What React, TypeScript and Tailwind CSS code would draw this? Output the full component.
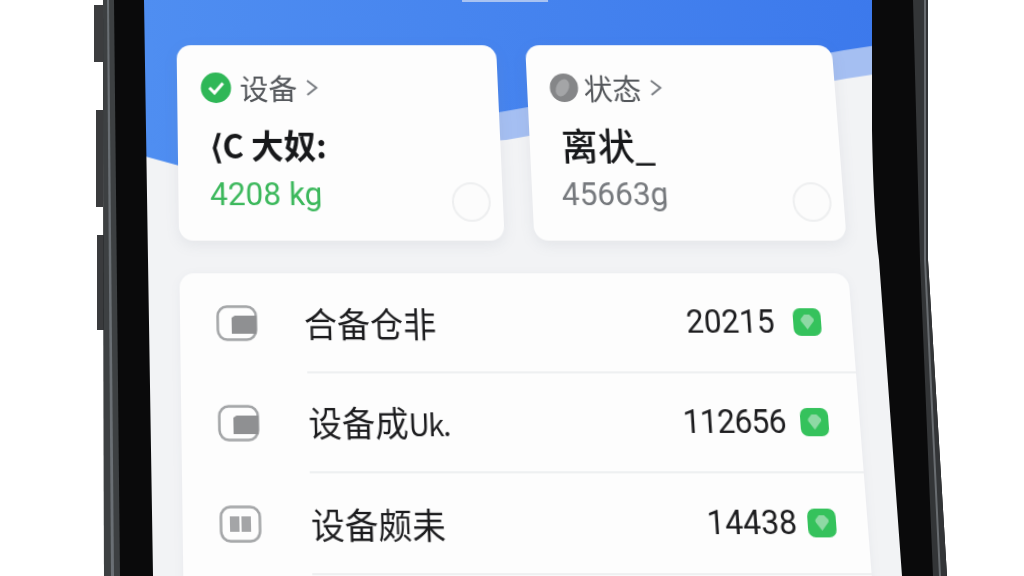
import React from "react";

const cjk = { fontFamily: '"Noto Sans CJK SC", "Noto Sans", sans-serif' };

function Chevron() {
  return (
    <svg width="14" height="20" viewBox="0 0 14 20" className="ml-[8px]">
      <polyline points="2,3 11,10 2,17" fill="none" stroke="#777b80" strokeWidth="2" />
    </svg>
  );
}

function CheckIcon() {
  return (
    <svg width="31" height="30" viewBox="0 0 31 30">
      <circle cx="15.5" cy="15" r="15" fill="#2fb757" />
      <polyline points="9,15 14,20 22.5,10.5" fill="none" stroke="#fff" strokeWidth="3" />
    </svg>
  );
}

function GrayIcon() {
  return (
    <svg width="29" height="28" viewBox="0 0 29 28" className="-ml-[1px]">
      <circle cx="14.5" cy="14" r="14" fill="#858688" />
      <ellipse cx="13" cy="14" rx="6" ry="9" transform="rotate(30 13 14)" fill="#a4a5a7" />
    </svg>
  );
}

function Ring() {
  return <div className="w-[38px] h-[38px] rounded-full border-2 border-[#eeeff0] bg-[#fcfcfc] shrink-0" />;
}

function DeviceIcon({ split }: { split?: boolean }) {
  return (
    <svg width="40" height="34" viewBox="0 0 40 34">
      <rect x="1.5" y="1.5" width="37" height="31" rx="9" fill="none" stroke="#a3a5a7" strokeWidth="2.5" />
      {split ? (
        <>
          <rect x="10" y="10" width="9" height="14" fill="#a4a5a7" />
          <rect x="21" y="10" width="9" height="14" fill="#a4a5a7" />
        </>
      ) : (
        <path d="M15 12 L18 10 H39 V27 H15 Z" fill="#8f9092" />
      )}
    </svg>
  );
}

function GreenBadge() {
  return (
    <svg width="27" height="26" viewBox="0 0 27 26">
      <rect width="27" height="26" rx="7" fill="#35c25c" />
      <path d="M7.5 10 L11 6 H16 L20 10 V12 L13.5 20 L7.5 12 Z" fill="#8ed9a4" />
    </svg>
  );
}

function Card({
  width,
  icon,
  label,
  title,
  titleClass,
  value,
  valueClass,
  labelGap,
  valueMargin,
}: {
  width: string;
  icon: React.ReactNode;
  label: string;
  title: string;
  titleClass: string;
  value: string;
  valueClass: string;
  labelGap: string;
  valueMargin: string;
}) {
  return (
    <div className={`${width} h-[190px] rounded-[14px] bg-[#fdfdfd] shadow-[0_4px_14px_rgba(120,130,150,0.12)] pl-[23px] pr-[12px] pt-[27px] flex flex-col`}>
      <div className="flex items-center h-[30px]">
        {icon}
        <span className={`${labelGap} text-[28.5px] leading-[30px] text-[#55585c]`} style={cjk}>
          {label}
        </span>
        <Chevron />
      </div>
      <div className={`mt-[20px] h-[40px] leading-[40px] whitespace-nowrap ${titleClass}`} style={cjk}>
        {title}
      </div>
      <div className="flex items-start justify-between">
        <span className={`${valueMargin} mt-[11px] text-[31px] leading-[36px] font-['Roboto',sans-serif] ${valueClass}`}>{value}</span>
        <div className="mt-[17px]">
          <Ring />
        </div>
      </div>
    </div>
  );
}

function Row({
  split,
  label,
  suffix,
  value,
  last,
  height,
  numberClass,
  labelClass,
}: {
  split?: boolean;
  label: string;
  suffix?: string;
  value: string;
  last?: boolean;
  height: string;
  numberClass?: string;
  labelClass?: string;
}) {
  return (
    <div className={`flex ${height} items-stretch`}>
      <div className="w-[122px] flex items-center pl-[35px] shrink-0">
        <DeviceIcon split={split} />
      </div>
      <div className={`flex-1 flex items-center pr-[30px] ${last ? "border-b-0" : "border-b-2 border-[#eef0f1]"}`}>
        <span className={`flex-1 text-[32px] leading-[40px] text-[#1c1c1e] whitespace-nowrap ${labelClass ?? ""}`} style={cjk}>
          {label}
          {suffix && <span className="text-[28px] tracking-[-1.5px]">{suffix}</span>}
        </span>
        <span className={`text-[30.5px] leading-[40px] text-[#1c1c1e] font-['Roboto',sans-serif] ${numberClass ?? ""}`}>{value}</span>
        {value && (
          <span className="ml-[18px] flex">
            <GreenBadge />
          </span>
        )}
      </div>
    </div>
  );
}

export default function App() {
  return (
    <div className="relative w-[1024px] h-[576px] overflow-hidden bg-white">
      <div className="w-[1024px] h-[576px] pl-[140px] origin-[50px_0px] blur-[0.4px] [transform:matrix3d(1,0,0,0,0,1,0,-0.0001,0,0,1,0,0,0,0,1)]">
        <div className="relative w-[740px] h-[640px] bg-[#f2f3f5] pl-[36px] pt-[45px] overflow-hidden">
          <svg className="absolute left-0 top-0" width="740" height="200" viewBox="0 0 740 200">
            <defs>
              <linearGradient id="b" x1="0" y1="0" x2="1" y2="0">
                <stop offset="0" stopColor="#4f8ef1" />
                <stop offset="1" stopColor="#3c79ec" />
              </linearGradient>
            </defs>
            <path d="M0 150 L40 160 L360 138 L700 78 L740 72 V0 H0 Z" fill="#a5bff2" />
            <path d="M0 153 L37 163 L360 110 L700 50 L740 44 V0 H0 Z" fill="url(#b)" />
            <rect x="322" y="0" width="86" height="2" fill="#a9c3f2" />
          </svg>
          <div className="relative flex gap-[29px] w-[653px]">
            <Card
              width="w-[318px]"
              icon={<CheckIcon />}
              label="设备"
              title="⟨C 大奴:"
              titleClass="ml-[9px] text-[32px] font-bold text-[#17181a]"
              value="4208 kg"
              valueClass="text-[#3cb85c]"
              labelGap="ml-[8px]"
              valueMargin="ml-[8px]"
            />
            <Card
              width="w-[305px]"
              icon={<GrayIcon />}
              label="状态"
              title="离状_"
              titleClass="ml-[8px] text-[36px] font-medium text-[#17181a]"
              value="45663g"
              valueClass="text-[#76797d]"
              labelGap="ml-[5px]"
              valueMargin="ml-[6px]"
            />
          </div>
          <div className="relative mt-[31px] w-[651px] h-[400px] rounded-t-[14px] bg-[#fdfdfd] shadow-[0_2px_10px_rgba(120,130,150,0.08)]">
            <Row height="h-[94px]" label="合备仓非" labelClass="-ml-[2px]" value="20215" />
            <Row height="h-[92px]" label="设备成" suffix="Uk." value="112656" numberClass="-mr-[4px] tracking-[-0.7px]" />
            <Row height="h-[92px]" split label="设备颇耒" value="14438" numberClass="-mr-[8px] -ml-[2px]" />
            <Row height="h-[92px]" label="" value="" last />
          </div>
        </div>
      </div>
      <svg className="absolute left-0 top-0 pointer-events-none" width="1024" height="576" viewBox="0 0 1024 576">
        <path d="M94 5 H103 V62 H94 Z" fill="#3c3d3f" />
        <path d="M96 110 H103 V207 H96 Z" fill="#3a3b3d" />
        <path d="M97 235 H104 V330 H97 Z" fill="#3a3b3d" />
        <path d="M103 0 H144 L148 260 L153 576 H104 Z" fill="#0a0a0b" />
        <path d="M103 0 H114 L120 576 H104 Z" fill="#3d4042" />
        <path d="M107 0 H109 L114 576 H111 Z" fill="#6a6f74" />
        <path d="M872 0 V130 C873 190 876 235 879 260 L902 576 H947 L928 260 V0 Z" fill="#0a0a0b" />
        <path d="M913 0 H928 V260 L947 576 H933 L920 260 Z" fill="#333537" />
        <path d="M924 0 H926 V260 L941 576 H939 L924 260 Z" fill="#686c70" />
      </svg>
    </div>
  );
}
